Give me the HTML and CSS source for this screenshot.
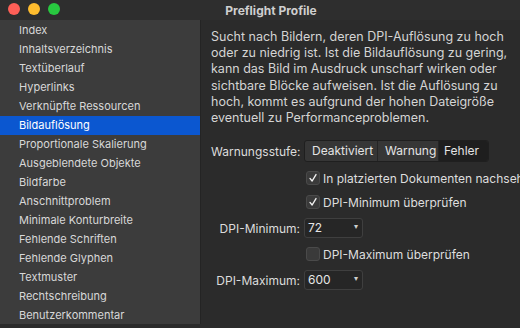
FILE: index.html
```html
<!DOCTYPE html>
<html lang="de">
<head>
  <meta charset="UTF-8">
  <meta name="viewport" content="width=device-width, initial-scale=1.0">
  <title>Preflight Profile</title>
  <link rel="stylesheet" href="styles.css">
</head>
<body>
  <div class="window">
    <header class="titlebar">
      <div class="lights">
        <span class="light red"></span>
        <span class="light yellow"></span>
        <span class="light green"></span>
      </div>
      <h1>Preflight Profile</h1>
    </header>
    <div class="main">
      <ul class="sidebar">
        <li>Index</li>
        <li>Inhaltsverzeichnis</li>
        <li>Textüberlauf</li>
        <li>Hyperlinks</li>
        <li>Verknüpfte Ressourcen</li>
        <li class="active">Bildauflösung</li>
        <li>Proportionale Skalierung</li>
        <li>Ausgeblendete Objekte</li>
        <li>Bildfarbe</li>
        <li>Anschnittproblem</li>
        <li>Minimale Konturbreite</li>
        <li>Fehlende Schriften</li>
        <li>Fehlende Glyphen</li>
        <li>Textmuster</li>
        <li>Rechtschreibung</li>
        <li>Benutzerkommentar</li>
      </ul>
      <section class="pane">
        <p class="desc">Sucht nach Bildern, deren DPI-Auflösung zu hoch oder zu niedrig ist. Ist die Bildauflösung zu gering, kann das Bild im Ausdruck unscharf wirken oder sichtbare Blöcke aufweisen. Ist die Auflösung zu hoch, kommt es aufgrund der hohen Dateigröße eventuell zu Performanceproblemen.</p>
        <div class="form">
          <div class="row seg-row">
            <label>Warnungsstufe:</label>
            <div class="segmented">
              <span class="seg-a">Deaktiviert</span>
              <span class="seg-b">Warnung</span>
              <span class="seg-c selected">Fehler</span>
            </div>
          </div>
          <div class="row check-row">
            <span></span>
            <div class="check"><span class="box on"><svg viewBox="0 0 14 14"><path d="M3.5 7.5 L6 10.5 L10.5 3" fill="none" stroke="#f2f2f2" stroke-width="1.6" stroke-linecap="round" stroke-linejoin="round"/></svg></span>In platzierten Dokumenten nachsehen</div>
          </div>
          <div class="row check-row">
            <span></span>
            <div class="check"><span class="box on"><svg viewBox="0 0 14 14"><path d="M3.5 7.5 L6 10.5 L10.5 3" fill="none" stroke="#f2f2f2" stroke-width="1.6" stroke-linecap="round" stroke-linejoin="round"/></svg></span>DPI-Minimum überprüfen</div>
          </div>
          <div class="row select-row">
            <label>DPI-Minimum:</label>
            <div class="select">72<span class="arrow">▾</span></div>
          </div>
          <div class="row check-row">
            <span></span>
            <div class="check"><span class="box"></span>DPI-Maximum überprüfen</div>
          </div>
          <div class="row select-row">
            <label>DPI-Maximum:</label>
            <div class="select">600<span class="arrow">▾</span></div>
          </div>
        </div>
      </section>
    </div>
  </div>
</body>
</html>
```

FILE: styles.css
```css
body {
  margin: 0;
  padding: 0;
  background-color: #2b2b2b;
  font-family: 'Inter', 'Liberation Sans', sans-serif;
  color: #d6d6d6;
  overflow: hidden;
}
.window {
  width: 520px;
  height: 328px;
  display: flex;
  flex-direction: column;
}
.titlebar {
  height: 20px;
  background-color: #2e2e2e;
  display: flex;
  align-items: center;
}
.lights {
  display: flex;
  gap: 8px;
  padding-left: 8px;
  margin-top: -2px;
}
.light {
  width: 12px;
  height: 12px;
  border-radius: 50%;
}
.red { background-color: #fe5f57; }
.yellow { background-color: #febc2e; }
.green { background-color: #28c840; }
.titlebar h1 {
  flex: 1;
  margin: 0 0 0 -52px;
  padding-left: 14px;
  text-align: center;
  font-size: 12px;
  font-weight: 700;
  color: #cfcfcf;
}
.main {
  flex: 1;
  display: flex;
  min-height: 0;
}
.sidebar {
  list-style: none;
  margin: 0;
  padding: 1px 0 0;
  width: 200px;
  height: 303px;
  background-color: #3c3c3c;
  border-right: 1px solid #242424;
}
.sidebar li {
  height: 19px;
  line-height: 19px;
  padding-left: 19px;
  font-size: 11px;
  color: #d8d8d8;
  white-space: nowrap;
}
.sidebar li.active {
  background-color: #0b57d0;
  color: #ffffff;
}
.pane {
  flex: 1;
  padding: 0 0 0 10px;
  min-width: 0;
  overflow: hidden;
}
.desc {
  margin: 9px 0 0;
  width: 300px;
  font-size: 12.5px;
  line-height: 16.2px;
  color: #d4d4d4;
}
.form {
  margin-top: 14px;
  display: flex;
  flex-direction: column;
  gap: 8px;
}
.row {
  display: grid;
  grid-template-columns: 89px 1fr;
  column-gap: 4px;
  align-items: center;
  font-size: 12px;
}
.row label {
  text-align: right;
  color: #dcdcdc;
  white-space: nowrap;
}
.seg-row { height: 22px; }
.check-row { height: 16px; }
.select-row { height: 20px; }
.segmented {
  display: flex;
  width: 185px;
  height: 22px;
  box-sizing: border-box;
  border: 1px solid #1f1f1f;
  border-radius: 3px;
  overflow: hidden;
  background-color: #363636;
}
.segmented span {
  box-sizing: border-box;
  padding-left: 7px;
  line-height: 20px;
  border-right: 1px solid #252525;
  color: #e4e4e4;
  white-space: nowrap;
}
.seg-a { width: 73px; }
.seg-b { width: 61px; }
.segmented span.selected {
  flex: 1;
  border-right: none;
  background-color: #1e1e1e;
  padding-left: 5px;
}
.check {
  display: flex;
  align-items: center;
  gap: 3px;
  white-space: nowrap;
  color: #dedede;
  padding-left: 2px;
}
.box {
  width: 14px;
  height: 14px;
  box-sizing: border-box;
  border: 1px solid #4a4a4a;
  border-radius: 3px;
  background-color: #3a3a3a;
  display: inline-flex;
}
.box svg {
  width: 12px;
  height: 12px;
}
.select {
  width: 59px;
  height: 20px;
  box-sizing: border-box;
  border: 1px solid #3f3f3f;
  border-radius: 3px;
  background-color: #262626;
  padding-left: 3px;
  line-height: 18px;
  color: #e6e6e6;
  display: flex;
  justify-content: space-between;
}
.arrow {
  font-size: 8px;
  color: #cfcfcf;
  padding-right: 4px;
  line-height: 14px;
}
```
